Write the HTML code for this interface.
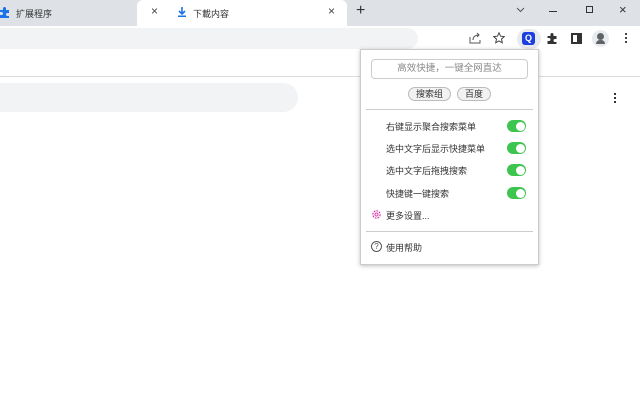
<!DOCTYPE html><html><head><style>
*{margin:0;padding:0;box-sizing:border-box}
body{width:640px;height:400px;background:#fff;position:relative;overflow:hidden;font-family:"Liberation Sans","Noto Sans CJK SC",sans-serif;font-size:9px;color:#333}
.a{position:absolute}
.tgl{position:absolute;left:507px;width:19px;height:12px;border-radius:6px;background:#3ec54f}
.tgl:after{content:"";position:absolute;right:1.5px;top:1.5px;width:9px;height:9px;border-radius:50%;background:#fff}
.it{position:absolute;left:386px;font-size:9px;color:#333}
</style></head><body>
<div class="a" style="left:0;top:0;width:640px;height:26px;background:#dee1e6"></div>
<div class="a" style="left:137px;top:0;width:210px;height:26px;background:#fff;border-radius:6px 6px 0 0"></div>
<svg class="a" style="left:0;top:7px" width="10" height="11" viewBox="0 0 10 11"><path d="M0 3h3v-1.5a1.5 1.5 0 0 1 3 0V3h3v3h-1.5a1.5 1.5 0 0 0 0 3H9v2H0V8h1.5a1.5 1.5 0 0 0 0-3H0z" fill="#1a73e8"/></svg>
<div class="a" style="left:16px;top:7px;font-size:9px;color:#333">扩展程序</div>
<div class="a" style="left:151px;top:4px;font-size:12px;color:#444">×</div>
<svg class="a" style="left:178px;top:7px" width="8" height="10" viewBox="0 0 8 10"><path d="M4 0v6M1 4l3 3 3-3M0 9.3h8" stroke="#1a73e8" stroke-width="1.6" fill="none"/></svg>
<div class="a" style="left:193px;top:7px;font-size:9px;color:#333">下載内容</div>
<div class="a" style="left:328px;top:4px;font-size:12px;color:#444">×</div>
<div class="a" style="left:356px;top:2px;font-size:16px;color:#333">+</div>
<svg class="a" style="left:516px;top:7px" width="9" height="6"><path d="M1 1l3.5 3.5L8 1" stroke="#555" fill="none"/></svg>
<div class="a" style="left:549px;top:11px;width:8px;height:1px;background:#333"></div>
<div class="a" style="left:586px;top:6px;width:7px;height:7px;border:1px solid #333"></div>
<div class="a" style="left:619px;top:2px;font-size:13px;color:#333">×</div>
<div class="a" style="left:0;top:28px;width:418px;height:21px;background:#f1f3f4;border-radius:0 11px 11px 0"></div>
<svg class="a" style="left:469px;top:32px" width="12" height="12" viewBox="0 0 12 12"><path d="M1 5v6h10V8M4 8c0-3 2-5 6-5M8 1l2 2-2 2" stroke="#555" fill="none"/></svg>
<svg class="a" style="left:493px;top:32px" width="12" height="12" viewBox="0 0 12 12"><path d="M6 .8l1.6 3.4 3.7.4-2.8 2.5.8 3.7L6 8.9 2.7 10.8l.8-3.7L.7 4.6l3.7-.4z" stroke="#444" fill="none"/></svg>
<div class="a" style="left:517px;top:29px;width:24px;height:20px;border-radius:10px;background:#e8eaed"></div>
<div class="a" style="left:522px;top:32px;width:13px;height:13px;border-radius:3px;background:#1a3ee0;color:#fff;font-size:9px;text-align:center;line-height:13px;font-weight:bold">Q</div>
<svg class="a" style="left:547px;top:33px" width="11" height="11" viewBox="0 0 10 11"><path d="M0 3h3v-1.5a1.5 1.5 0 0 1 3 0V3h3v3h-1.5a1.5 1.5 0 0 0 0 3H9v2H0V8h1.5a1.5 1.5 0 0 0 0-3H0z" fill="#333"/></svg>
<div class="a" style="left:571px;top:33px;width:11px;height:11px;border:2px solid #333;border-right-width:5px"></div>
<div class="a" style="left:592px;top:30px;width:17px;height:17px;border-radius:50%;background:#e8eaed"></div>
<div class="a" style="left:597px;top:33px;width:7px;height:7px;border-radius:50%;background:#5f6368"></div>
<div class="a" style="left:596px;top:40px;width:9px;height:4px;border-radius:4px 4px 0 0;background:#5f6368"></div>
<div class="a" style="left:625px;top:33px;width:2px;height:2px;background:#444;box-shadow:0 4px #444,0 8px #444"></div>
<div class="a" style="left:0;top:76px;width:640px;height:1px;background:#dadce0"></div>
<div class="a" style="left:0;top:83px;width:298px;height:29px;background:#f1f3f4;border-radius:0 15px 15px 0"></div>
<div class="a" style="left:614px;top:93px;width:2px;height:2px;background:#333;box-shadow:0 4px #333,0 8px #333"></div>
<div class="a" style="left:360px;top:49px;width:179px;height:216px;background:#fff;border:1px solid #ccc;box-shadow:0 1px 4px rgba(0,0,0,.25)"></div>
<div class="a" style="left:371px;top:59px;width:157px;height:20px;border:1px solid #ccc;border-radius:4px;color:#888;font-size:9.5px;text-align:center;line-height:18px">高效快捷，一键全网直达</div>
<div class="a" style="left:408px;top:87px;width:43px;height:14px;border:1px solid #bbb;border-radius:7px;background:#f2f2f2;font-size:9px;text-align:center;line-height:12px">搜索组</div>
<div class="a" style="left:457px;top:87px;width:34px;height:14px;border:1px solid #bbb;border-radius:7px;background:#f2f2f2;font-size:9px;text-align:center;line-height:12px">百度</div>
<div class="a" style="left:366px;top:109px;width:167px;height:1px;background:#ccc"></div>
<div class="it" style="top:120px">右键显示聚合搜索菜单</div><div class="tgl" style="top:120px"></div>
<div class="it" style="top:142px">选中文字后显示快捷菜单</div><div class="tgl" style="top:142px"></div>
<div class="it" style="top:164px">选中文字后拖拽搜索</div><div class="tgl" style="top:164px"></div>
<div class="it" style="top:187px">快捷键一键搜索</div><div class="tgl" style="top:187px"></div>
<svg class="a" style="left:371px;top:209px" width="11" height="11" viewBox="0 0 12 12"><circle cx="6" cy="6" r="4" stroke="#d63aa8" stroke-width="1.3" fill="none" stroke-dasharray="2 1.1"/><circle cx="6" cy="6" r="1.7" stroke="#d63aa8" fill="none"/></svg>
<div class="it" style="top:209px">更多设置...</div>
<div class="a" style="left:366px;top:231px;width:167px;height:1px;background:#ccc"></div>
<div class="a" style="left:371px;top:241px;width:11px;height:11px;border:1px solid #555;border-radius:50%;font-size:8px;text-align:center;line-height:9px;color:#555">?</div>
<div class="it" style="top:241px">使用帮助</div>
</body></html>
